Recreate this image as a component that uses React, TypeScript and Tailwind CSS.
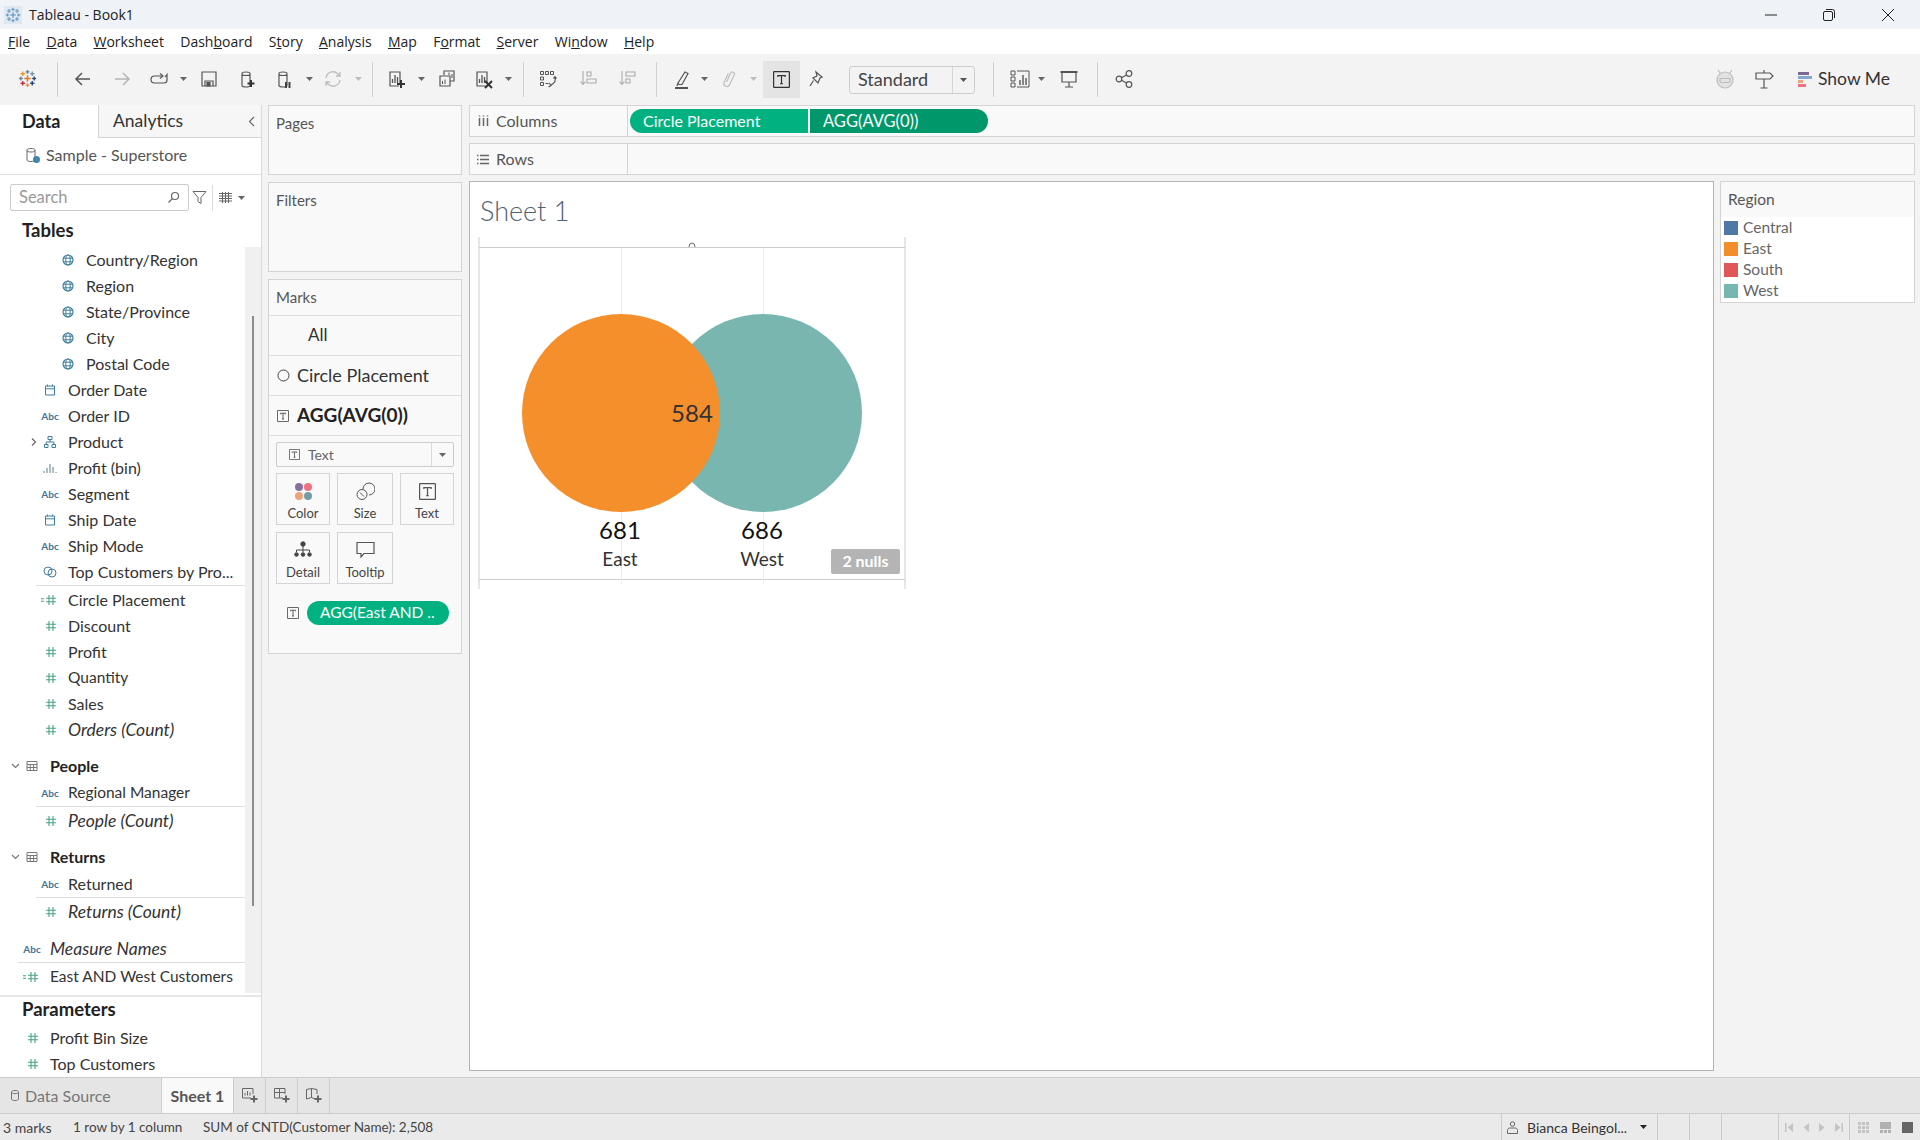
import React from "react";

const ink = "#555555";

const TableauLogo = ({ size = 18, mono = false }: { size?: number; mono?: boolean }) => {
  const plus = (x: number, y: number, r: number, c: string, w = 1.4) => (
    <g stroke={mono ? "#6a9cc0" : c} strokeWidth={w}>
      <line x1={x - r} y1={y} x2={x + r} y2={y} />
      <line x1={x} y1={y - r} x2={x} y2={y + r} />
    </g>
  );
  return (
    <svg width={size} height={size} viewBox="0 0 20 20">
      {plus(10, 10, 3.4, "#e8762d", 1.6)}
      {plus(10, 3, 2, "#5b879b")}
      {plus(10, 17, 2, "#eb912b")}
      {plus(3, 10, 2, "#59879b")}
      {plus(17, 10, 2, "#1f447a")}
      {plus(5, 5, 2.4, "#eb912b")}
      {plus(15, 5, 2.4, "#7099a6")}
      {plus(5, 15, 2.4, "#c72035")}
      {plus(15, 15, 2.4, "#1f447a")}
    </svg>
  );
};

const I = ({ children, w = 20, h = 20, box = "0 0 20 20" }: { children: React.ReactNode; w?: number; h?: number; box?: string }) => (
  <svg width={w} height={h} viewBox={box} fill="none" stroke={ink} strokeWidth="1.2">
    {children}
  </svg>
);

const Caret = ({ c = "#666666" }: { c?: string }) => (
  <svg width="7" height="4" viewBox="0 0 7 4">
    <path d="M0 0h7L3.5 4z" fill={c} />
  </svg>
);

const Cyl = ({ stroke = ink }: { stroke?: string }) => (
  <path d="M4 4.5C4 2.5 12 2.500 12 4.500V16.500C12 18.500 4 18.500 4 16.500ZM4 5C4 7 12 7 12 5" stroke={stroke} />
);

const ChartBox = () => (
  <>
    <path d="M13 15V3H3V17H12" />
    <path d="M5.500 14V10M8 14V6M10.500 14V8" strokeWidth="1.300" />
  </>
);

const TBox = ({ size = 14, c = "#444444" }: { size?: number; c?: string }) => (
  <svg width={size} height={size} viewBox="0 0 14 14" fill="none" stroke={c} strokeWidth="1">
    <rect x="0.500" y="0.500" width="13" height="13" rx="0.500" />
    <path d="M4 5V3.800H10V5M7 3.800V10.500M5.800 10.500H8.200" />
  </svg>
);

const Sep = () => <div className="w-px h-[35px] bg-[#cfcfcf]" />;

const Tool = ({ className, children }: { className: string; children: React.ReactNode }) => (
  <div className={`flex items-center justify-center pb-[2px] ${className}`}>{children}</div>
);

const menu: [string, string, string][] = [
  ["", "F", "ile"],
  ["", "D", "ata"],
  ["", "W", "orksheet"],
  ["Dash", "b", "oard"],
  ["S", "t", "ory"],
  ["", "A", "nalysis"],
  ["", "M", "ap"],
  ["F", "o", "rmat"],
  ["", "S", "erver"],
  ["Wi", "n", "dow"],
  ["", "H", "elp"],
];

const Toolbar = () => (
  <div className="h-[51px] bg-[#f3f3f3] flex items-center pl-2 shrink-0">
    <Tool className="w-[38px]"><TableauLogo size={19} /></Tool>
    <div className="w-[11px]" />
    <Sep />
    <div className="w-[6px]" />
    <Tool className="w-[38px]">
      <I><path d="M17 10H3M9 4l-6 6 6 6" strokeWidth="1.500" /></I>
    </Tool>
    <Tool className="w-[39px]">
      <svg width="20" height="20" viewBox="0 0 20 20" fill="none" stroke="#b5b5b5" strokeWidth="1.500"><path d="M3 10H17M11 4l6 6-6 6" /></svg>
    </Tool>
    <Tool className="w-[36px]">
      <I><path d="M13 7H5.500a3 3 0 0 0 0 7H15a3 3 0 0 0 3-3V8M16 8l2-2.500L18 8" /><path d="M11 4.500l3 2.500-3 2.500" /></I>
    </Tool>
    <Tool className="w-[12px]"><Caret /></Tool>
    <Tool className="w-[39px]">
      <I><path d="M3 3H17V17H3Z" /><path d="M6 17V12H14V17" /><rect x="8" y="13.500" width="3" height="3.500" fill={ink} /></I>
    </Tool>
    <Tool className="w-[39px]">
      <I><Cyl /><path d="M13 11V18M9.500 14.500H16.500" strokeWidth="2" stroke="#333333" /></I>
    </Tool>
    <Tool className="w-[36px]">
      <I><Cyl /><path d="M11 13V19M14.500 13V19" strokeWidth="2" stroke="#444444" /></I>
    </Tool>
    <Tool className="w-[12px]"><Caret /></Tool>
    <Tool className="w-[36px]">
      <svg width="20" height="20" viewBox="0 0 20 20" fill="none" stroke="#bdbdbd" strokeWidth="1.300"><path d="M3 9a7 7 0 0 1 12-4l2 2M17 11a7 7 0 0 1-12 4l-2-2M17 3v4h-4M3 17v-4h4" /></svg>
    </Tool>
    <Tool className="w-[14px]"><Caret c="#bdbdbd" /></Tool>
    <div className="w-[7px]" />
    <Sep />
    <div className="w-[9px]" />
    <Tool className="w-[30px]">
      <I><ChartBox /><path d="M14 11V19M10 15H18" strokeWidth="2" stroke="#333333" /></I>
    </Tool>
    <div className="w-[3px]" />
    <Tool className="w-[12px]"><Caret /></Tool>
    <Tool className="w-[40px]">
      <I><path d="M7 6V2H17V12H13" /><path d="M3 7H13V17H3Z" /><path d="M9 5V5M12 6V3.500M15 9V5M5.500 15v-3M8 15v-4.500" strokeWidth="1" /></I>
    </Tool>
    <Tool className="w-[34px]">
      <I><ChartBox /><path d="M11 12L18 19M18 12L11 19" strokeWidth="2" stroke="#333333" /></I>
    </Tool>
    <Tool className="w-[14px]"><Caret /></Tool>
    <div className="w-[8px]" />
    <Sep />
    <Tool className="w-[48px]">
      <I>
        <path d="M2.500 2.500h3v3h-3zM7.500 2.500h3v3h-3zM12.500 2.500h3v3h-3zM2.500 8h3v3h-3zM2.500 13.500h3v3h-3zM7.500 14.500h3" strokeWidth="1" />
        <path d="M17 8c1 3 0 6-4 8M11 14l2 2.500-2.500 1.500M15.500 9.500l1.500-1.800 1.500 1.800" />
      </I>
    </Tool>
    <Tool className="w-[34px]">
      <svg width="20" height="20" viewBox="0 0 20 20" fill="none" stroke="#aaaaaa" strokeWidth="1.100"><path d="M4 2V15M1.500 12.500L4 15.500 6.500 12.500M8 3h4v4H8zM8 10h9v4H8z" /></svg>
    </Tool>
    <Tool className="w-[44px]">
      <svg width="20" height="20" viewBox="0 0 20 20" fill="none" stroke="#aaaaaa" strokeWidth="1.100"><path d="M4 2V15M1.500 12.500L4 15.500 6.500 12.500M8 3h9v4H8zM8 10h4v4H8z" /></svg>
    </Tool>
    <div className="w-[6px]" />
    <Sep />
    <div className="w-[14px]" />
    <Tool className="w-[24px]">
      <I><path d="M5 14L12 3l3 1.500-6 11H6ZM5 14l-1 3" /><path d="M2 19H15" strokeWidth="2" /></I>
    </Tool>
    <Tool className="w-[18px]"><Caret /></Tool>
    <Tool className="w-[32px]">
      <svg width="20" height="20" viewBox="0 0 20 20" fill="none" stroke="#bdbdbd" strokeWidth="1.200"><g transform="rotate(25 10 10)"><path d="M7 5v10a3 3 0 0 0 6 0V4a2 2 0 0 0-4 0v10" /></g></svg>
    </Tool>
    <Tool className="w-[16px]"><Caret c="#bdbdbd" /></Tool>
    <div className="w-[2px]" />
    <div className="w-[37px] h-[37px] bg-[#e4e4e4] flex items-center justify-center"><TBox size={17} c="#333333" /></div>
    <Tool className="w-[34px]">
      <I><path d="M9 3l6 5-2 1-2 5-5-5 4-2ZM6.500 11.500L3 17" /></I>
    </Tool>
    <div className="w-[15px]" />
    <div className="w-[126px] h-[28px] border border-[#cccccc] rounded-[3px] flex items-center bg-[#f3f3f3]">
      <div className="flex-1 pl-2 text-[18px] text-[#444444]">Standard</div>
      <div className="w-[22px] h-full border-l border-[#d4d4d4] flex items-center justify-center"><Caret c="#555555" /></div>
    </div>
    <div className="w-[18px]" />
    <Sep />
    <div className="w-[10px]" />
    <Tool className="w-[32px]">
      <I w={20} h={18} box="0 0 20 18">
        <path d="M1 1h4v4H1zM1 7h4v4H1zM1 13h4v4H1zM7 1H19V17H7" strokeWidth="1" />
        <path d="M10 15V10M13 15V5M16 15V8" strokeWidth="1.400" />
      </I>
    </Tool>
    <Tool className="w-[10px]"><Caret /></Tool>
    <Tool className="w-[46px]">
      <I><path d="M1.500 3H18.500" strokeWidth="2" /><path d="M3 3V13H17V3M10 13V18M6 18H14" /></I>
    </Tool>
    <div className="w-[5px]" />
    <Sep />
    <Tool className="w-[52px]">
      <I><circle cx="15" cy="4.500" r="2.800" /><circle cx="15" cy="15.500" r="2.800" /><circle cx="5" cy="10" r="2.800" /><path d="M7.500 8.700L12.500 6M7.500 11.300L12.500 14" /></I>
    </Tool>
    <div className="flex-1" />
    <Tool className="w-[24px]">
      <svg width="20" height="20" viewBox="0 0 20 20" fill="none" stroke="#bdbdbd" strokeWidth="1.200">
        <circle cx="10" cy="11" r="8" fill="#e2e2e2" />
        <path d="M5 9.500h10v3a1 1 0 0 1-1 1H6a1 1 0 0 1-1-1ZM3 1l2.500 3.500M17 1l-2.500 3.500" />
      </svg>
    </Tool>
    <div className="w-[15px]" />
    <Tool className="w-[24px]">
      <I><path d="M2 4H16L19 7 16 10H2ZM10 10V19M6.500 19H13.500M10 1V4" /></I>
    </Tool>
    <div className="w-[22px]" />
    <div className="flex flex-col gap-[1px] w-[14px] mr-[6px]">
      <div className="w-[11px] h-[3px] bg-[#7d6a94]" />
      <div className="w-[14px] h-[3px] bg-[#83a9cf]" />
      <div className="w-[5px] h-[3px] bg-[#eda47a]" />
      <div className="w-[8px] h-[3px] bg-[#f0707f]" />
    </div>
    <div className="text-[17.500px] text-[#333333] pr-[30px]">Show Me</div>
  </div>
);

type Kind = "globe" | "cal" | "abc" | "tree" | "bin" | "set" | "hash" | "calc" | "none";

const blue = "#3f7f9e";
const green = "#43a582";

const FieldIcon = ({ kind }: { kind: Kind }) => {
  if (kind === "abc") return <span className="text-[10px] font-bold text-[#3f7395] leading-none">Abc</span>;
  if (kind === "hash" || kind === "calc")
    return (
      <svg width="18" height="12" viewBox="0 0 18 12" fill="none" stroke={green} strokeWidth="1.100">
        <path d="M8 1V11M12 1V11M5 4.200H15M5 7.800H15" />
        {kind === "calc" ? <path d="M0 4.800H3M0 7.200H3" /> : null}
      </svg>
    );
  return (
    <svg width="14" height="14" viewBox="0 0 14 14" fill="none" stroke={blue} strokeWidth="1">
      {kind === "globe" && (
        <>
          <circle cx="7" cy="7" r="5" strokeWidth="1.200" />
          <ellipse cx="7" cy="7" rx="2.200" ry="5" />
          <path d="M2 5.200H12M2 8.800H12" />
        </>
      )}
      {kind === "cal" && <path d="M2.500 3H11.500V12H2.500ZM2.500 5.800H11.500M4.500 1.500V3.500M9.500 1.500V3.500" />}
      {kind === "tree" && <path d="M5 1.500H9V4.500H5ZM1.500 9.500H5V12.500H1.500ZM9 9.500H12.500V12.500H9ZM7 4.500V7M3.200 9.500V7H10.800V9.500" />}
      {kind === "bin" && <path d="M1 12V10M4 12V7M7 12V3M10 12V6M13 12V11" stroke="#5a7a90" />}
      {kind === "set" && (
        <>
          <circle cx="5" cy="6" r="4" />
          <circle cx="9" cy="8" r="4" />
        </>
      )}
    </svg>
  );
};

const Row = ({ kind, label, level = 1, italic = false, expand = false, small = false }: { kind: Kind; label: string; level?: 0 | 1 | 2; italic?: boolean; expand?: boolean; small?: boolean }) => (
  <div className={`h-[26px] flex items-center text-[#333333] whitespace-nowrap relative shrink-0 ${italic ? "text-[17.500px]" : small ? "text-[15.500px]" : "text-[16px]"} ${level === 2 ? "pl-[56px]" : level === 1 ? "pl-[38px]" : "pl-[20px]"}`}>
    {expand && (
      <svg className="absolute left-[31px] top-[9px]" width="6" height="8" viewBox="0 0 6 8" fill="none" stroke="#666666" strokeWidth="1.200"><path d="M1 0.500L4.500 4 1 7.500" /></svg>
    )}
    <span className="w-[24px] flex justify-center shrink-0"><FieldIcon kind={kind} /></span>
    <span className={`ml-[6px] ${italic ? "italic" : ""}`}>{label}</span>
  </div>
);

const TableHead = ({ label, className = "" }: { label: string; className?: string }) => (
  <div className={`h-[26px] flex items-center ${className}`}>
    <svg className="ml-[11px]" width="9" height="6" viewBox="0 0 9 6" fill="none" stroke="#777777" strokeWidth="1.200"><path d="M1 1l3.500 3.500L8 1" /></svg>
    <svg className="ml-[6px]" width="12" height="12" viewBox="0 0 12 12" fill="none" stroke="#777777" strokeWidth="1"><path d="M1 1.500H11V10.500H1ZM1 4.500H11M1 7.500H11M4.300 4.500V10.500M7.600 4.500V10.500" /></svg>
    <span className="ml-[12px] text-[16px] font-bold text-[#222222]">{label}</span>
  </div>
);

const DataPane = () => (
  <div className="w-[262px] bg-white border-r border-[#d9d9d9] flex flex-col shrink-0 overflow-hidden">
    <div className="h-[33px] flex shrink-0">
      <div className="w-[98px] pl-[22px] text-[18px] font-bold text-[#222222] flex items-center">Data</div>
      <div className="flex-1 bg-[#f6f6f6] border-l border-b border-[#d4d4d4] pl-[14px] text-[17.500px] text-[#333333] flex items-center justify-between pr-[6px]">
        <span>Analytics</span>
        <svg width="7" height="11" viewBox="0 0 7 11" fill="none" stroke="#666666" strokeWidth="1.100"><path d="M6 1L1.500 5.500 6 10" /></svg>
      </div>
    </div>
    <div className="h-[37px] border-b border-[#e0e0e0] flex items-center pl-[26px] pb-[2px] text-[16px] text-[#555555] shrink-0">
      <svg width="15" height="17" viewBox="0 0 15 17" fill="none" stroke="#666666" strokeWidth="1"><path d="M1 3c0-2 8-2 8 0v10c0 2-8 2-8 0ZM1 3.500c0 2 8 2 8 0" /><circle cx="10.500" cy="12.500" r="3.500" fill="#3f87b0" stroke="none" /></svg>
      <span className="ml-[5px]">Sample - Superstore</span>
    </div>
    <div className="h-[36px] flex items-center pl-[10px] pt-[9px] pb-0 shrink-0">
      <div className="w-[179px] h-[27px] border border-[#cccccc] rounded-[2px] flex items-center justify-between px-2 text-[16.500px] text-[#999999]">
        <span>Search</span>
        <svg width="13" height="13" viewBox="0 0 13 13" fill="none" stroke="#666666" strokeWidth="1.200"><circle cx="8" cy="5" r="3.500" /><path d="M5.500 7.500L1.500 11.500" /></svg>
      </div>
      <svg className="ml-[3px]" width="15" height="15" viewBox="0 0 15 15" fill="none" stroke="#666666" strokeWidth="1"><path d="M1 1.500H14L9 7.500V13.500L6 11.500V7.500Z" /></svg>
      <div className="w-px h-[26px] bg-[#dddddd] ml-[5px]" />
      <svg className="ml-[6px]" width="13" height="11" viewBox="0 0 13 11" fill="none" stroke="#666666" strokeWidth="1"><path d="M0 1.500H13M0 4H13M0 6.500H13M0 9H13M3.500 0V11M6.500 0V11M9.500 0V11" /></svg>
      <span className="ml-[6px]"><Caret /></span>
    </div>
    <div className="h-[36px] pl-[22px] pt-[6px] text-[18.500px] font-bold leading-[26px] text-[#222222] shrink-0">Tables</div>
    <div className="flex h-[746px] shrink-0">
      <div className="flex-1 min-w-0">
        <Row kind="globe" label="Country/Region" level={2} />
        <Row kind="globe" label="Region" level={2} />
        <Row kind="globe" label="State/Province" level={2} />
        <Row kind="globe" label="City" level={2} />
        <Row kind="globe" label="Postal Code" level={2} />
        <Row kind="cal" label="Order Date" />
        <Row kind="abc" label="Order ID" />
        <Row kind="tree" label="Product" expand />
        <Row kind="bin" label="Profit (bin)" />
        <Row kind="abc" label="Segment" />
        <Row kind="cal" label="Ship Date" />
        <Row kind="abc" label="Ship Mode" />
        <Row kind="set" label="Top Customers by Pro..." />
        <div className="ml-[36px] h-[2px] border-t border-[#dddddd]" />
        <Row kind="calc" label="Circle Placement" />
        <Row kind="hash" label="Discount" />
        <Row kind="hash" label="Profit" />
        <Row kind="hash" label="Quantity" small />
        <Row kind="hash" label="Sales" />
        <Row kind="hash" label="Orders (Count)" italic />
        <TableHead label="People" className="mt-[10px]" />
        <div className="mt-px"><Row kind="abc" label="Regional Manager" small /></div>
        <div className="ml-[36px] h-[2px] border-t border-[#dddddd]" />
        <Row kind="hash" label="People (Count)" italic />
        <TableHead label="Returns" className="mt-[10px]" />
        <div className="mt-px"><Row kind="abc" label="Returned" /></div>
        <div className="ml-[36px] h-[2px] border-t border-[#dddddd]" />
        <Row kind="hash" label="Returns (Count)" italic />
        <div className="mt-[11px]"><Row kind="abc" label="Measure Names" level={0} italic /></div>
        <div className="ml-[18px] h-[2px] border-t border-[#dddddd]" />
        <Row kind="calc" label="East AND West Customers" level={0} small />
      </div>
      <div className="w-[16px] bg-[#f0f0f0] shrink-0 pl-[7px] pt-[69px]">
        <div className="w-[2px] h-[590px] bg-[#8c8c8c]" />
      </div>
    </div>
    <div className="border-t-2 border-[#e6e6e6] h-[30px] pl-[22px] mt-[2px] text-[18.500px] font-bold leading-[24px] text-[#222222] shrink-0">Parameters</div>
    <Row kind="hash" label="Profit Bin Size" level={0} />
    <Row kind="hash" label="Top Customers" level={0} />
  </div>
);

const MarkCard = ({ label, className, children }: { label: string; className: string; children: React.ReactNode }) => (
  <div className={`h-[52px] border border-[#d4d4d4] flex flex-col items-center justify-end pb-[2px] ${className}`}>
    <div className="h-[26px] flex items-center">{children}</div>
    <div className="text-[13px] text-[#444444] leading-[18px]">{label}</div>
  </div>
);

const Shelves = () => (
  <div className="w-[194px] ml-[6px] shrink-0 flex flex-col">
    <div className="h-[70px] border border-[#d4d4d4] bg-[#f9f9f9] pl-[7px] pt-[6px] text-[15px] text-[#555555]">Pages</div>
    <div className="h-[90px] mt-[7px] border border-[#d4d4d4] bg-[#f9f9f9] pl-[7px] pt-[6px] text-[15px] text-[#555555]">Filters</div>
    <div className="h-[375px] mt-[7px] border border-[#d4d4d4] bg-[#f9f9f9] flex flex-col">
      <div className="h-[36px] border-b border-[#dedede] pl-[7px] flex items-center text-[15px] text-[#555555]">Marks</div>
      <div className="h-[40px] border-b border-[#dedede] pl-[39px] pb-[2px] flex items-center text-[17px] text-[#333333]">All</div>
      <div className="h-[40px] border-b border-[#dedede] pl-[8px] pb-[1px] flex items-center text-[18px] text-[#333333]">
        <svg width="13" height="13" viewBox="0 0 13 13" fill="none" stroke="#444444" strokeWidth="1"><circle cx="6.500" cy="6.500" r="5.500" /></svg>
        <span className="ml-[7px]">Circle Placement</span>
      </div>
      <div className="h-[40px] border-b border-[#dedede] pl-[8px] flex items-center text-[19px] font-bold text-[#222222]">
        <TBox size={12} />
        <span className="ml-[8px]">AGG(AVG(0))</span>
      </div>
      <div className="px-[7px] pt-[6px]">
        <div className="h-[25px] border border-[#cccccc] rounded-[2px] flex items-center bg-[#f9f9f9]">
          <div className="flex-1 flex items-center pl-[12px] pb-[1px] text-[14px] text-[#666666]">
            <TBox size={11} />
            <span className="ml-[8px]">Text</span>
          </div>
          <div className="w-[22px] h-full border-l border-[#d9d9d9] flex items-center justify-center"><Caret /></div>
        </div>
        <div className="flex gap-[7px] mt-[6px]">
          <MarkCard label="Color" className="w-[54px]">
            <div className="grid grid-cols-2 gap-[1px]">
              <div className="w-[8px] h-[8px] rounded-full bg-[#86709c]" />
              <div className="w-[8px] h-[8px] rounded-full bg-[#f0707f]" />
              <div className="w-[8px] h-[8px] rounded-full bg-[#eda47a]" />
              <div className="w-[8px] h-[8px] rounded-full bg-[#6f9eab]" />
            </div>
          </MarkCard>
          <MarkCard label="Size" className="w-[56px]">
            <svg width="19" height="19" viewBox="0 0 19 19" fill="none" stroke="#555555" strokeWidth="1"><path d="M7 7a6 6 0 1 1 6 6" /><circle cx="6" cy="12.500" r="5" /><path d="M4 10.500L8 14.500" /></svg>
          </MarkCard>
          <MarkCard label="Text" className="w-[54px]">
            <TBox size={17} c="#555555" />
          </MarkCard>
        </div>
        <div className="flex gap-[7px] mt-[7px]">
          <MarkCard label="Detail" className="w-[54px]">
            <svg width="18" height="18" viewBox="0 0 18 18" fill="none" stroke="#444444" strokeWidth="1"><circle cx="9" cy="3" r="2.200" fill="#444444" /><path d="M9 5V11M2.500 11V9H15.500V11" /><circle cx="2.500" cy="13.500" r="1.800" fill="#444444" /><circle cx="9" cy="13.500" r="1.800" fill="#444444" /><circle cx="15.500" cy="13.500" r="1.800" fill="#444444" /></svg>
          </MarkCard>
          <MarkCard label="Tooltip" className="w-[56px]">
            <svg width="19" height="18" viewBox="0 0 19 18" fill="none" stroke="#555555" strokeWidth="1.200"><path d="M1 1.500H18V12.500H8L5 16V12.500H1Z" /></svg>
          </MarkCard>
        </div>
        <div className="flex items-center mt-[17px] pl-[11px]">
          <TBox size={12} />
          <div className="ml-[8px] w-[142px] h-[24px] rounded-full bg-[#02b180] text-white text-[15.500px] flex items-center pl-[13px] whitespace-nowrap">AGG(East AND ..</div>
        </div>
      </div>
    </div>
  </div>
);

const Venn = () => (
  <svg width="430" height="356" viewBox="0 0 430 356" className="font-['Lato',sans-serif] block">
    <path d="M1 1V353M427 1V353" stroke="#cfcfcf" />
    <path d="M1 11.500H427M1 343.500H427" stroke="#cccccc" />
    <path d="M143.500 12V348M285.500 12V348" stroke="#ececec" />
    <path d="M211 11a3 4 0 0 1 6 0" stroke="#666666" fill="none" />
    <circle cx="285" cy="177" r="99" fill="#79b6b0" />
    <circle cx="143" cy="177" r="99" fill="#f48f2c" />
    <text x="214" y="186" textAnchor="middle" fontSize="24" fill="#333333">584</text>
    <text x="142" y="303" textAnchor="middle" fontSize="24" fill="#111111">681</text>
    <text x="284" y="303" textAnchor="middle" fontSize="24" fill="#111111">686</text>
    <text x="142" y="330" textAnchor="middle" fontSize="19" fill="#333333">East</text>
    <text x="284" y="330" textAnchor="middle" fontSize="19" fill="#333333">West</text>
    <rect x="353" y="313" width="69" height="25" rx="2" fill="#b4b4b4" />
    <text x="387.500" y="331" textAnchor="middle" fontSize="16" fontWeight="700" fill="#ffffff">2 nulls</text>
  </svg>
);

const LegendItem = ({ label, className }: { label: string; className: string }) => (
  <div className="h-[21px] flex items-center pl-[3px] text-[15.500px] text-[#666666]">
    <div className={`w-[14px] h-[14px] ${className}`} />
    <span className="ml-[5px]">{label}</span>
  </div>
);

const Main = () => (
  <div className="flex-1 min-w-0 ml-[7px] mr-[5px] flex flex-col">
    <div className="h-[32px] border border-[#d4d4d4] bg-[#f9f9f9] flex items-center">
      <div className="w-[158px] h-full border-r border-[#d4d4d4] flex items-center pl-[8px] text-[16px] text-[#555555]">
        <svg width="11" height="13" viewBox="0 0 11 13" fill="none" stroke="#666666" strokeWidth="1.500"><path d="M1.500 3V11M5.500 3V11M9.500 3V11M1.500 0.500V1.500M5.500 0.500V1.500M9.500 0.500V1.500" /></svg>
        <span className="ml-[7px]">Columns</span>
      </div>
      <div className="ml-[2px] w-[178px] h-[24px] rounded-l-full bg-[#02b180] text-white text-[16px] flex items-center pl-[13px]">Circle Placement</div>
      <div className="ml-[2px] w-[178px] h-[24px] rounded-r-full bg-[#00976a] text-white text-[16.500px] flex items-center pl-[13px]">AGG(AVG(0))</div>
    </div>
    <div className="h-[32px] mt-[6px] border border-[#d4d4d4] bg-[#f9f9f9] flex items-center">
      <div className="w-[158px] h-full border-r border-[#d4d4d4] flex items-center pl-[7px] text-[16px] text-[#555555]">
        <svg width="12" height="11" viewBox="0 0 12 11" fill="none" stroke="#666666" strokeWidth="1.400"><path d="M0 1.500H1.500M3 1.500H12M0 5.500H1.500M3 5.500H12M0 9.500H1.500M3 9.500H12" /></svg>
        <span className="ml-[7px]">Rows</span>
      </div>
    </div>
    <div className="flex flex-1 mt-[6px] min-h-0 pb-[6px]">
      <div className="w-[1245px] shrink-0 bg-white border border-[#b3b3b3] pl-[8px] pt-[13px]">
        <div className="h-[41px] pl-[2px] text-[27px] font-light leading-[32px] text-[#4f6272]">Sheet 1</div>
        <Venn />
      </div>
      <div className="flex-1 ml-[6px]">
        <div className="border border-[#d4d4d4] bg-white pb-[1px]">
          <div className="h-[35px] bg-[#f9f9f9] flex items-center pl-[7px] text-[15.500px] text-[#555555]">Region</div>
          <LegendItem label="Central" className="bg-[#4e79a7]" />
          <LegendItem label="East" className="bg-[#f28e2b]" />
          <LegendItem label="South" className="bg-[#e15759]" />
          <LegendItem label="West" className="bg-[#76b7b2]" />
        </div>
      </div>
    </div>
  </div>
);

const NewTab = ({ children }: { children: React.ReactNode }) => (
  <div className="w-[32px] h-full border-r border-[#cccccc] flex items-center justify-center">{children}</div>
);

const NavTri = ({ d }: { d: string }) => (
  <svg width="10" height="11" viewBox="0 0 10 11"><path d={d} fill="#c4c4c4" /></svg>
);

const Bottom = () => (
  <>
    <div className="h-[37px] bg-[#e5e5e5] border-t border-[#cccccc] border-b flex items-stretch shrink-0 text-[#666666]">
      <div className="w-[162px] flex items-center pl-[11px] text-[16px] border-r border-[#cccccc] text-[#777777]">
        <svg width="8" height="11" viewBox="0 0 8 11" fill="none" stroke="#777777" strokeWidth="1"><path d="M0.500 2c0-2 7-2 7 0v7c0 2-7 2-7 0ZM0.500 2.500c0 1.500 7 1.500 7 0" /></svg>
        <span className="ml-[6px]">Data Source</span>
      </div>
      <div className="w-[72px] bg-[#f9f9f9] border-r border-[#cccccc] flex items-center justify-center text-[16px] font-bold text-[#555555]">Sheet 1</div>
      <NewTab>
        <svg width="16" height="15" viewBox="0 0 16 15" fill="none" stroke="#666666" strokeWidth="1"><path d="M9 10H0.500V0.500H11V6M3 7.500V5M5.500 7.500V3M8 7.500V4.500" /><path d="M12 7.500V14.500M8.500 11H15.500" strokeWidth="2" /></svg>
      </NewTab>
      <NewTab>
        <svg width="16" height="15" viewBox="0 0 16 15" fill="none" stroke="#666666" strokeWidth="1"><path d="M9 10H0.500V0.500H11V6M0.500 4.500H11M5.500 0.500V10" /><path d="M12 7.500V14.500M8.500 11H15.500" strokeWidth="2" /></svg>
      </NewTab>
      <NewTab>
        <svg width="16" height="15" viewBox="0 0 16 15" fill="none" stroke="#666666" strokeWidth="1"><path d="M9 11L5.500 9.500 0.500 11V1.500L5.500 0.500 11 1.500V6M5.500 0.500V9.500" /><path d="M12 7.500V14.500M8.500 11H15.500" strokeWidth="2" /></svg>
      </NewTab>
    </div>
    <div className="flex-1 bg-[#eaeaea] flex items-stretch text-[13.500px] text-[#444444] whitespace-nowrap">
      <div className="w-[73px] pl-[3px] flex items-center text-[14px]">3 marks</div>
      <div className="w-[130px] flex items-center">1 row by 1 column</div>
      <div className="w-[1298px] flex items-center">SUM of CNTD(Customer Name): 2,508</div>
      <div className="w-[157px] border-l border-r border-[#cccccc] flex items-center pl-[5px] text-[14px]">
        <svg width="11" height="13" viewBox="0 0 11 13" fill="none" stroke="#666666" strokeWidth="1"><circle cx="5.500" cy="3" r="2.200" /><path d="M0.500 12.500V9.500C0.500 7.500 2 7 3 7H8C9 7 10.500 7.500 10.500 9.500V12.500Z" /></svg>
        <span className="ml-[9px] w-[113px] text-[#333333]">Bianca Beingol...</span>
        <Caret c="#222222" />
      </div>
      <div className="w-[32px] border-r border-[#cccccc]" />
      <div className="w-[32px] border-r border-[#cccccc]" />
      <div className="w-[57px] border-r border-[#cccccc]" />
      <div className="w-[71px] border-r border-[#cccccc] flex items-center justify-center gap-[6px]">
        <NavTri d="M0 1h1.500v9H0ZM8 1v9L2.500 5.500Z" />
        <NavTri d="M8 1v9L2.500 5.500Z" />
        <NavTri d="M2 1v9L7.500 5.500Z" />
        <NavTri d="M2 1v9L7.500 5.500ZM8.500 1H10v9H8.500Z" />
      </div>
      <div className="flex-1 flex items-center justify-center gap-[11px]">
        <svg width="11" height="11" viewBox="0 0 11 11" fill="#c4c4c4"><path d="M0 0h3v3H0zM4 0h3v3H4zM8 0h3v3H8zM0 4h3v3H0zM4 4h3v3H4zM8 4h3v3H8zM0 8h3v3H0zM4 8h3v3H4zM8 8h3v3H8z" /></svg>
        <svg width="11" height="11" viewBox="0 0 11 11" fill="#b0b0b0"><path d="M0 0h11v7H0zM0 8h3v3H0zM4 8h3v3H4zM8 8h3v3H8z" /></svg>
        <div className="w-[11px] h-[11px] bg-[#666666]" />
      </div>
    </div>
  </>
);

export default function App() {
  return (
    <div className="w-[1920px] h-[1140px] flex flex-col overflow-hidden bg-[#f3f3f3] font-['Lato',sans-serif]">
      <div className="h-[29px] bg-[#eff3f7] flex items-center shrink-0 font-['Open_Sans',sans-serif]">
        <div className="w-[18px] h-[18px] ml-[4px] bg-[#dfe8f0] flex items-center justify-center"><TableauLogo size={16} mono /></div>
        <span className="ml-[7px] text-[14px] text-[#222222]">Tableau - Book1</span>
        <div className="flex-1" />
        <svg width="12" height="2" viewBox="0 0 12 2" className="mr-[46px]"><path d="M0 1H12" stroke="#222222" /></svg>
        <svg width="12" height="12" viewBox="0 0 12 12" fill="none" stroke="#222222" className="mr-[47px]"><rect x="0.500" y="2.500" width="9" height="9" rx="1.500" /><path d="M3 0.500H9.500a2 2 0 0 1 2 2V9" /></svg>
        <svg width="12" height="12" viewBox="0 0 12 12" fill="none" stroke="#222222" className="mr-[26px]"><path d="M0 0L12 12M12 0L0 12" /></svg>
      </div>
      <div className="h-[25px] bg-white flex items-center shrink-0 pl-[8px] gap-[16.300px] text-[14px] text-[#222222] font-['Open_Sans',sans-serif]">
        {menu.map(([a, u, b]) => (
          <span key={a + u + b}>
            {a}
            <span className="underline">{u}</span>
            {b}
          </span>
        ))}
      </div>
      <Toolbar />
      <div className="h-[972px] flex shrink-0">
        <DataPane />
        <Shelves />
        <Main />
      </div>
      <Bottom />
    </div>
  );
}
